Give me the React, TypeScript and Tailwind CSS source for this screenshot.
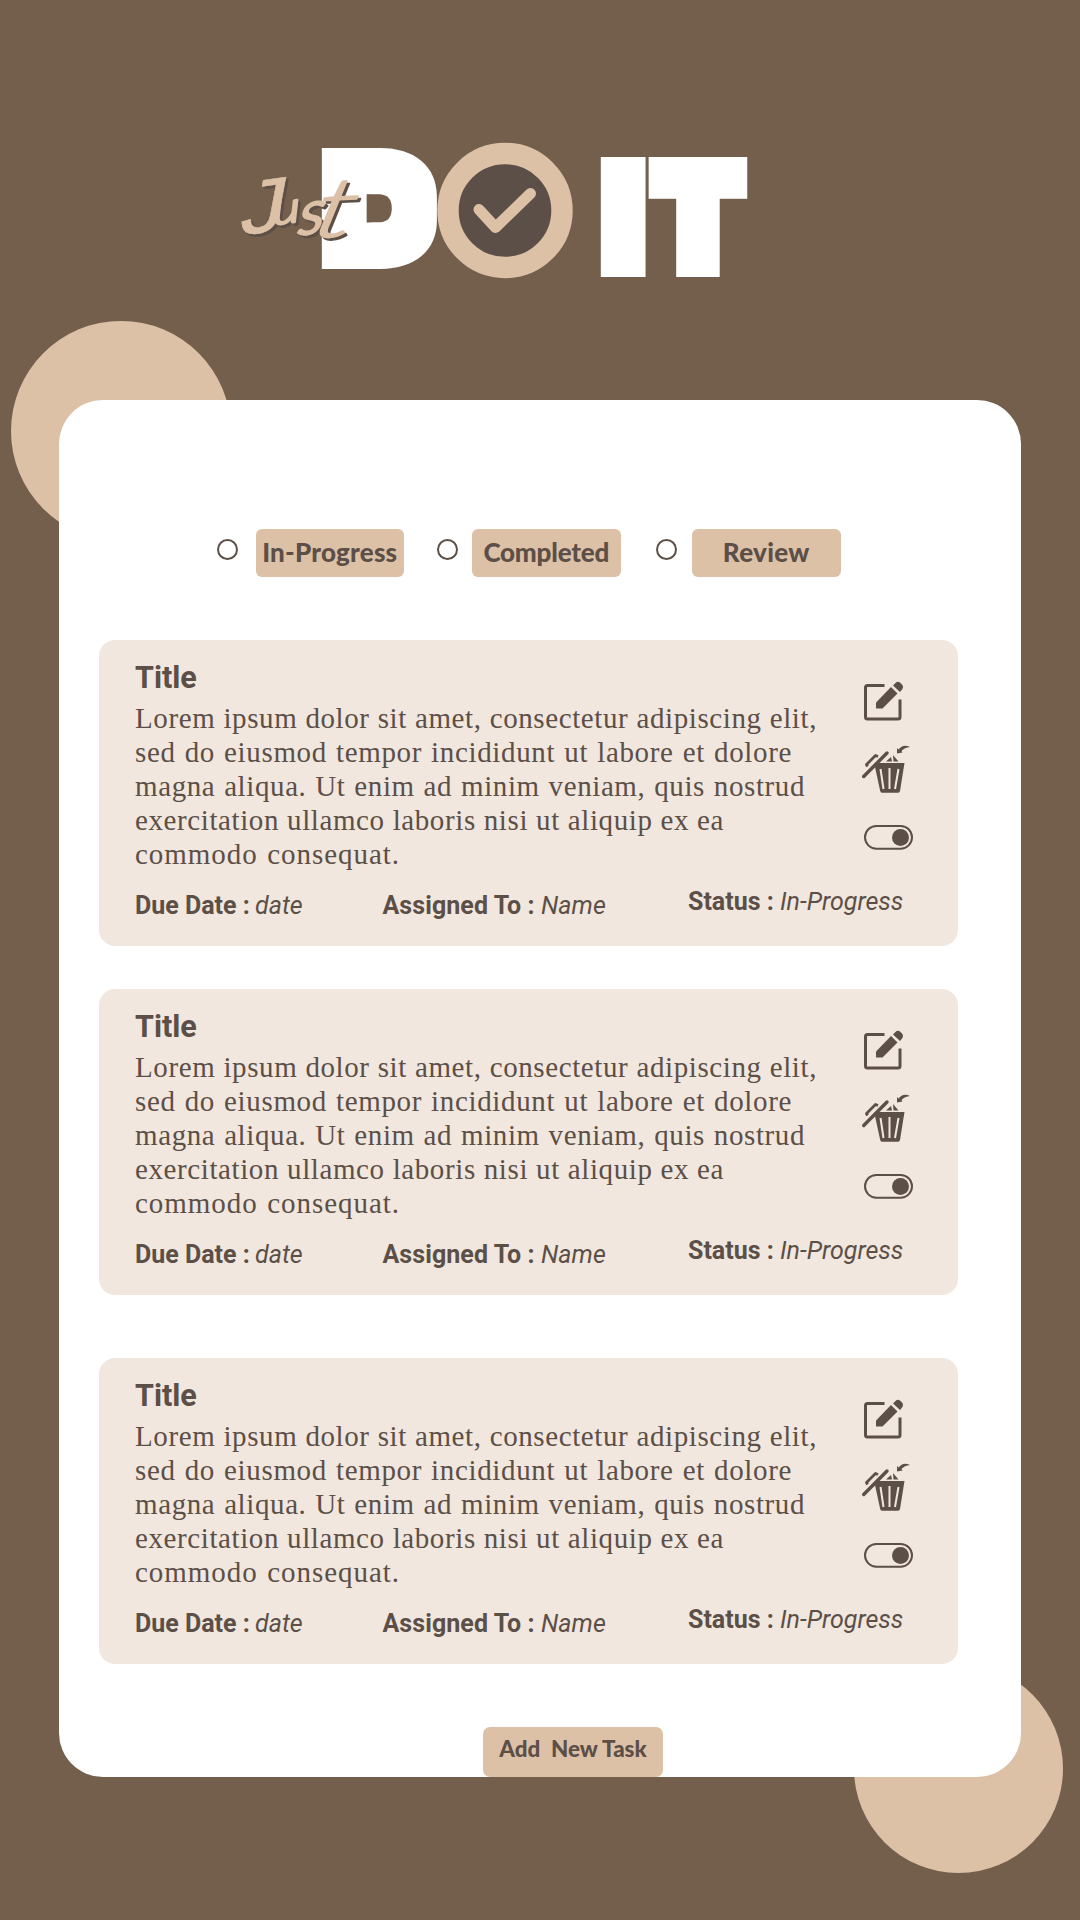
const LINES = [
  { text: 'Lorem ipsum dolor sit amet, consectetur adipiscing elit,', cls: 'w-[682px] tracking-[0.6px]' },
  { text: 'sed do eiusmod tempor incididunt ut labore et dolore', cls: 'w-[657px] tracking-[0.65px]' },
  { text: 'magna aliqua. Ut enim ad minim veniam, quis nostrud', cls: 'w-[670px] tracking-[0.6px]' },
  { text: 'exercitation ullamco laboris nisi ut aliquip ex ea', cls: 'w-[589px] tracking-[0.6px]' },
  { text: 'commodo consequat.', cls: 'w-[265px] tracking-[0.95px]' },
];

function JustWord({ color }: { color: string }) {
  return (
    <g fill={color} stroke={color} strokeLinejoin="round" strokeLinecap="round" fontStyle="italic">
      <text transform="translate(236 236) rotate(-8) skewX(-6) scale(1.2 1)" fontFamily="'Liberation Mono', monospace" fontSize="78" strokeWidth="0.5">J</text>
      <text transform="translate(273 225) rotate(-8) skewX(-6) scale(1.25 1)" fontFamily="Lato, sans-serif" fontWeight="300" fontSize="43" strokeWidth="2.5">u</text>
      <text transform="translate(297 236) rotate(-8) skewX(-14) scale(1.1 1)" fontFamily="Lato, sans-serif" fontWeight="400" fontSize="62" strokeWidth="1">s</text>
      <text transform="translate(310 238) rotate(-3) skewX(-16) scale(1.5 1)" fontFamily="Lato, sans-serif" fontWeight="300" fontSize="82" strokeWidth="1.5">t</text>
    </g>
  );
}

function Logo() {
  return (
    <svg className="block h-[400px] w-full" viewBox="0 0 1080 400">
      <defs>
        <filter id="heavy" x="-20%" y="-20%" width="140%" height="140%">
          <feMorphology operator="dilate" radius="7 12" />
        </filter>
      </defs>
      <g fill="#fff" fontFamily="Inter, sans-serif" fontWeight="900">
        <g filter="url(#heavy)">
          <text transform="translate(321.5 256.5) scale(1.18 1)" fontSize="133.4">D</text>
        </g>
        <g stroke="#fff" strokeMiterlimit="10" strokeWidth="20" fontSize="137">
          <text transform="translate(604.3 267) scale(0.95 1)">I</text>
          <text transform="translate(654.5 267) scale(0.924 1)">T</text>
        </g>
      </g>
      <path d="M366.7 194.2H380Q391.800 195 391.800 208.200Q391.800 221.500 380 222.200H366.700Z" fill="#745f4d" />
      <circle cx="505" cy="210.5" r="57" fill="#5c4f47" stroke="#dcc1a7" strokeWidth="21.4" />
      <path d="M479 209.5L495.5 227.5L530.5 193.5" fill="none" stroke="#dcc1a7" strokeWidth="11" strokeLinecap="round" strokeLinejoin="round" />
      <g transform="translate(2.5 2.5)"><JustWord color="#5c4f47" /></g>
      <JustWord color="#dcc1a7" />
    </svg>
  );
}

function EditIcon() {
  return (
    <svg className="block h-[42px] w-[42px]" viewBox="0 0 42 42" fill="none">
      <path d="M21.5 5.5H4.5Q2.5 5.5 2.5 7.5V37Q2.5 39 4.5 39H35Q37 39 37 37V19.5" stroke="#5c4f47" strokeWidth="3" />
      <path d="M13 22.5L28 7L34.5 13.5L19.5 28.5H13Z" fill="#5c4f47" />
      <path d="M30 5.5L32.5 3Q34.5 1 37 2.5L39 4.5Q41 7 39 9.5L37 12Z" fill="#5c4f47" />
    </svg>
  );
}

function TrashIcon() {
  return (
    <svg className="block h-[50px] w-[50px]" viewBox="0 0 50 50" fill="none">
      <path d="M2.7 32.5L26 9" stroke="#5c4f47" strokeWidth="3.4" strokeLinecap="round" />
      <path d="M6.5 22.5L5.5 20.5L14.5 11.5L17 12.5" stroke="#5c4f47" strokeWidth="2.8" strokeLinejoin="round" />
      <path d="M14 23L17.5 19H43.5L39 47Q38.7 48.7 37 48.7H21Q19.5 48.7 19.2 47Z" fill="#5c4f47" />
      <path d="M19.5 25L22.5 45M28.5 24V45M37.5 25L34 45" stroke="#f1e7de" strokeWidth="2" />
      <path d="M25 17.5L30 13L31 17.5ZM32 11L37.5 17.5H32.5Z" fill="#5c4f47" />
      <path d="M36 4L37.5 5.5Q42 -0.5 49 3Q43.5 3.5 40.5 7L41.5 8.5L36 9.5Z" fill="#5c4f47" />
    </svg>
  );
}

function ToggleIcon() {
  return (
    <svg className="block h-[25px] w-[49px]" viewBox="0 0 49 25" fill="none">
      <rect x="1" y="1" width="47" height="22.7" rx="11.35" stroke="#5c4f47" strokeWidth="2" />
      <circle cx="36.5" cy="12.4" r="8.5" fill="#5c4f47" />
    </svg>
  );
}

function TaskCard() {
  return (
    <article className="flex h-[306px] w-[859px] flex-col rounded-[16px] bg-[#f1e7de] pl-9">
      <div className="flex">
        <div className="w-[725px] pt-5">
          <h2 className="font-['Roboto'] text-[30.5px] leading-[36px] font-bold">Title</h2>
          <div className="mt-[5px] font-['Liberation_Serif'] text-[29px] leading-[34px]">
            {LINES.map((l) => (
              <p key={l.text} className={`${l.cls} whitespace-nowrap [text-align-last:justify]`}>{l.text}</p>
            ))}
          </div>
        </div>
        <div className="flex h-[231px] flex-col items-start pt-10">
          <div className="ml-[3px]"><EditIcon /></div>
          <div className="mt-[22px] ml-px"><TrashIcon /></div>
          <div className="mt-[31px] ml-[3.5px]"><ToggleIcon /></div>
        </div>
      </div>
      <div className="mt-[16px] flex font-['Roboto'] text-[25px] leading-[30px] whitespace-nowrap">
        <p className="w-[247.5px] pt-1"><b>Due Date :</b> <i className="-ml-px">date</i></p>
        <p className="w-[305.5px] pt-1 tracking-[0.07px]"><b>Assigned To :</b> <i>Name</i></p>
        <p><b>Status :</b> <i>In-Progress</i></p>
      </div>
    </article>
  );
}

function Filter({ label, gap, tracking }: { label: string; gap: string; tracking: string }) {
  return (
    <div className={`flex ${gap}`}>
      <span className="mt-[10px] h-[21px] w-[21px] rounded-full border-2 border-[#5c4f47]" />
      <span className={`flex h-12 w-[148.5px] items-center justify-center rounded-[6px] bg-[#dcc1a7] pb-0.5 font-['Lato'] text-[26px] leading-none font-black ${tracking}`}>{label}</span>
    </div>
  );
}

export default function App() {
  return (
    <div className="relative h-[1920px] w-[1080px] overflow-hidden bg-[#745f4d] text-[#5c4f47]">
      <div className="absolute top-[321px] left-[11px] h-[220px] w-[220px] rounded-full bg-[#dcc1a7]" />
      <div className="absolute top-[1664px] left-[853.5px] h-[209px] w-[209px] rounded-full bg-[#dcc1a7]" />
      <header className="relative"><Logo /></header>
      <main className="relative ml-[59px] flex h-[1377px] w-[962px] flex-col rounded-[44px] bg-white pt-[129px] pl-10">
        <div className="ml-[118px] flex">
          <div className="w-[220px]"><Filter label="In-Progress" gap="gap-[17.5px]" tracking="tracking-[0.2px]" /></div>
          <div className="w-[218.5px]"><Filter label="Completed" gap="gap-[14px]" tracking="tracking-[-0.2px]" /></div>
          <Filter label="Review" gap="gap-[15.5px]" tracking="tracking-[0.3px]" />
        </div>
        <div className="mt-[63px]"><TaskCard /></div>
        <div className="mt-[43px]"><TaskCard /></div>
        <div className="mt-[63px]"><TaskCard /></div>
        <button className="mt-[63px] ml-[384px] flex h-[50px] w-[180px] items-center justify-center rounded-[7px] bg-[#dcc1a7] pb-1.5 font-['Lato'] text-[22.4px] leading-none font-black whitespace-pre">Add  New Task</button>
      </main>
    </div>
  );
}
